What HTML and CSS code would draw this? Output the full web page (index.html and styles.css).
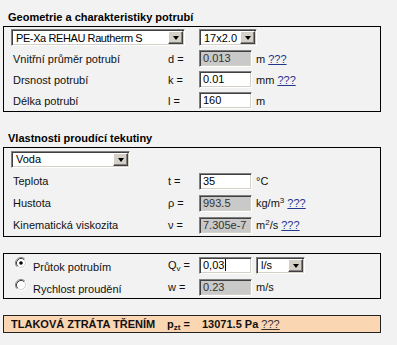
FILE: index.html
```html
<!DOCTYPE html>
<html lang="cs">
<head>
<meta charset="utf-8">
<title>Tlaková ztráta</title>
<link rel="stylesheet" href="styles.css">
</head>
<body>
<div class="page">
  <h2 class="title first">Geometrie a charakteristiky potrubí</h2>
  <div class="box b1">
    <div class="selrow">
      <div class="sel s1"><span class="sel-text tight">PE-Xa REHAU Rautherm S</span><span class="btn"><i class="tri"></i></span></div>
      <div class="sel s2"><span class="sel-text">17x2.0</span><span class="btn"><i class="tri"></i></span></div>
    </div>
    <div class="row">
      <span class="lbl">Vnitřní průměr potrubí</span><span class="eq">d =</span>
      <div class="fld ro">0.013</div><span class="unit">m <a class="q">???</a></span>
    </div>
    <div class="row">
      <span class="lbl">Drsnost potrubí</span><span class="eq">k =</span>
      <div class="fld">0.01</div><span class="unit">mm <a class="q">???</a></span>
    </div>
    <div class="row">
      <span class="lbl">Délka potrubí</span><span class="eq">l =</span>
      <div class="fld">160</div><span class="unit">m</span>
    </div>
  </div>

  <h2 class="title second">Vlastnosti proudící tekutiny</h2>
  <div class="box b2">
    <div class="selrow">
      <div class="sel s3"><span class="sel-text">Voda</span><span class="btn"><i class="tri"></i></span></div>
    </div>
    <div class="row">
      <span class="lbl">Teplota</span><span class="eq">t =</span>
      <div class="fld">35</div><span class="unit">°C</span>
    </div>
    <div class="row">
      <span class="lbl">Hustota</span><span class="eq">ρ =</span>
      <div class="fld ro">993.5</div><span class="unit">kg/m<sup>3</sup> <a class="q">???</a></span>
    </div>
    <div class="row">
      <span class="lbl">Kinematická viskozita</span><span class="eq">ν =</span>
      <div class="fld ro">7.305e-7</div><span class="unit">m<sup>2</sup>/s <a class="q">???</a></span>
    </div>
  </div>

  <div class="box b3">
    <div class="row">
      <span class="lbl radio-lbl">
        <svg class="radio" width="12" height="12" viewBox="0 0 12 12">
          <circle cx="6" cy="6" r="4.2" fill="#fff"/>
          <path d="M9.89 2.11 A5.5 5.5 0 0 0 2.11 9.89" fill="none" stroke="#808080"/>
          <path d="M9.18 2.82 A4.5 4.5 0 0 0 2.82 9.18" fill="none" stroke="#404040"/>
          <path d="M9.89 2.11 A5.5 5.5 0 0 1 2.11 9.89" fill="none" stroke="#ffffff"/>
          <path d="M9.18 2.82 A4.5 4.5 0 0 1 2.82 9.18" fill="none" stroke="#d4d0c8"/>
          <circle cx="6" cy="6" r="1.8" fill="#000"/>
        </svg>
        <span class="rtext">Průtok potrubím</span>
      </span>
      <span class="eq">Q<sub>v</sub> =</span>
      <div class="fld">0,03<i class="caret"></i></div>
      <div class="sel s4"><span class="sel-text">l/s</span><span class="btn"><i class="tri"></i></span></div>
    </div>
    <div class="row">
      <span class="lbl radio-lbl">
        <svg class="radio" width="12" height="12" viewBox="0 0 12 12">
          <circle cx="6" cy="6" r="4.2" fill="#fff"/>
          <path d="M9.89 2.11 A5.5 5.5 0 0 0 2.11 9.89" fill="none" stroke="#808080"/>
          <path d="M9.18 2.82 A4.5 4.5 0 0 0 2.82 9.18" fill="none" stroke="#404040"/>
          <path d="M9.89 2.11 A5.5 5.5 0 0 1 2.11 9.89" fill="none" stroke="#ffffff"/>
          <path d="M9.18 2.82 A4.5 4.5 0 0 1 2.82 9.18" fill="none" stroke="#d4d0c8"/>
        </svg>
        <span class="rtext">Rychlost proudění</span>
      </span>
      <span class="eq">w =</span>
      <div class="fld ro">0.23</div><span class="unit">m/s</span>
    </div>
  </div>

  <div class="result">
    <span class="res-lbl">TLAKOVÁ ZTRÁTA TŘENÍM</span>
    <span class="res-eq">p<sub>zt</sub> =</span>
    <span class="res-val">13071.5 Pa <a class="q dark">???</a></span>
  </div>
</div>
</body>
</html>
```

FILE: styles.css
```css
html, body {
  margin: 0;
  padding: 0;
  background: #f2f2f2;
}

body {
  font-family: "Liberation Sans", Arial, sans-serif;
  font-size: 11px;
  color: #111;
}

.page {
  padding: 11px 0 0 3px;
  width: 378px;
}

.title {
  margin: 0 0 2px 0;
  padding-left: 5px;
  font-size: 11px;
  line-height: 13px;
  font-weight: bold;
  color: #000;
}

.title.second {
  margin-top: 20px;
}

.box {
  border: 1px solid #000;
  padding: 0 0 0 8px;
}

.b1 .row, .b1 .selrow {
  height: 21px;
}

.b2 .row, .b2 .selrow,
.b3 .row {
  height: 22px;
}

.b3 {
  margin-top: 16px;
}

.selrow {
  display: flex;
  align-items: center;
}

.row {
  display: grid;
  grid-template-columns: 156px 31px 53px auto;
  align-items: center;
}

.lbl {
  padding-left: 1px;
  white-space: nowrap;
}

.eq {
  white-space: nowrap;
}

.unit {
  margin-left: 4px;
  white-space: nowrap;
}

sup {
  font-size: 8px;
  line-height: 0;
  vertical-align: 4px;
}

sub {
  font-size: 8px;
  line-height: 0;
  vertical-align: -2px;
}

.q {
  color: #24368c;
  text-decoration: underline;
}

.q.dark {
  color: #333;
}

/* classic inset field */
.fld {
  height: 17px;
  box-sizing: border-box;
  border: 1px solid;
  border-color: #808080 #ffffff #ffffff #808080;
  box-shadow: inset 1px 1px #404040, inset -1px -1px #d4d0c8;
  background: #fff;
  padding: 0 2px 0 3px;
  line-height: 15px;
  color: #000;
  display: flex;
  align-items: center;
  white-space: nowrap;
  overflow: hidden;
}

.fld.ro {
  background: #c9c9c9;
  color: #333;
}

.caret {
  display: inline-block;
  width: 1px;
  height: 12px;
  background: #000;
  margin-left: 1px;
}

/* classic dropdown */
.sel {
  height: 17px;
  box-sizing: border-box;
  border: 1px solid;
  border-color: #808080 #ffffff #ffffff #808080;
  box-shadow: inset 1px 1px #404040, inset -1px -1px #d4d0c8;
  background: #fff;
  display: flex;
  align-items: center;
  justify-content: space-between;
  padding: 1px;
}

.sel-text {
  padding-left: 3px;
  color: #000;
  white-space: nowrap;
}

.sel-text.tight {
  letter-spacing: -0.4px;
}

.btn {
  width: 15px;
  height: 13px;
  box-sizing: border-box;
  background: #d4d0c8;
  border: 1px solid;
  border-color: #ffffff #404040 #404040 #ffffff;
  box-shadow: inset -1px -1px #808080;
  display: flex;
  align-items: center;
  justify-content: center;
}

.tri {
  width: 0;
  height: 0;
  border-left: 3.5px solid transparent;
  border-right: 3.5px solid transparent;
  border-top: 4px solid #000;
  margin-top: 1px;
}

.s1 {
  width: 174px;
  margin-left: -1px;
}

.s2 {
  width: 58px;
  margin-left: 14px;
}

.s3 {
  width: 119px;
  margin-left: -1px;
}

.s4 {
  width: 49px;
  margin-left: 4px;
}

.radio-lbl {
  display: flex;
  align-items: center;
  padding-left: 3px;
}

.radio {
  margin-top: -5px;
  flex: none;
}

.rtext {
  margin-left: 6px;
  padding-top: 3px;
}

.result {
  margin-top: 16px;
  height: 18px;
  box-sizing: border-box;
  border: 1px solid #222;
  background: #fbd6b2;
  display: grid;
  grid-template-columns: 156px 35px auto;
  align-items: center;
  padding-left: 7px;
  font-weight: bold;
  color: #111;
}

.res-lbl, .res-eq, .res-val {
  white-space: nowrap;
}

.res-val .q {
  font-weight: normal;
}
```
